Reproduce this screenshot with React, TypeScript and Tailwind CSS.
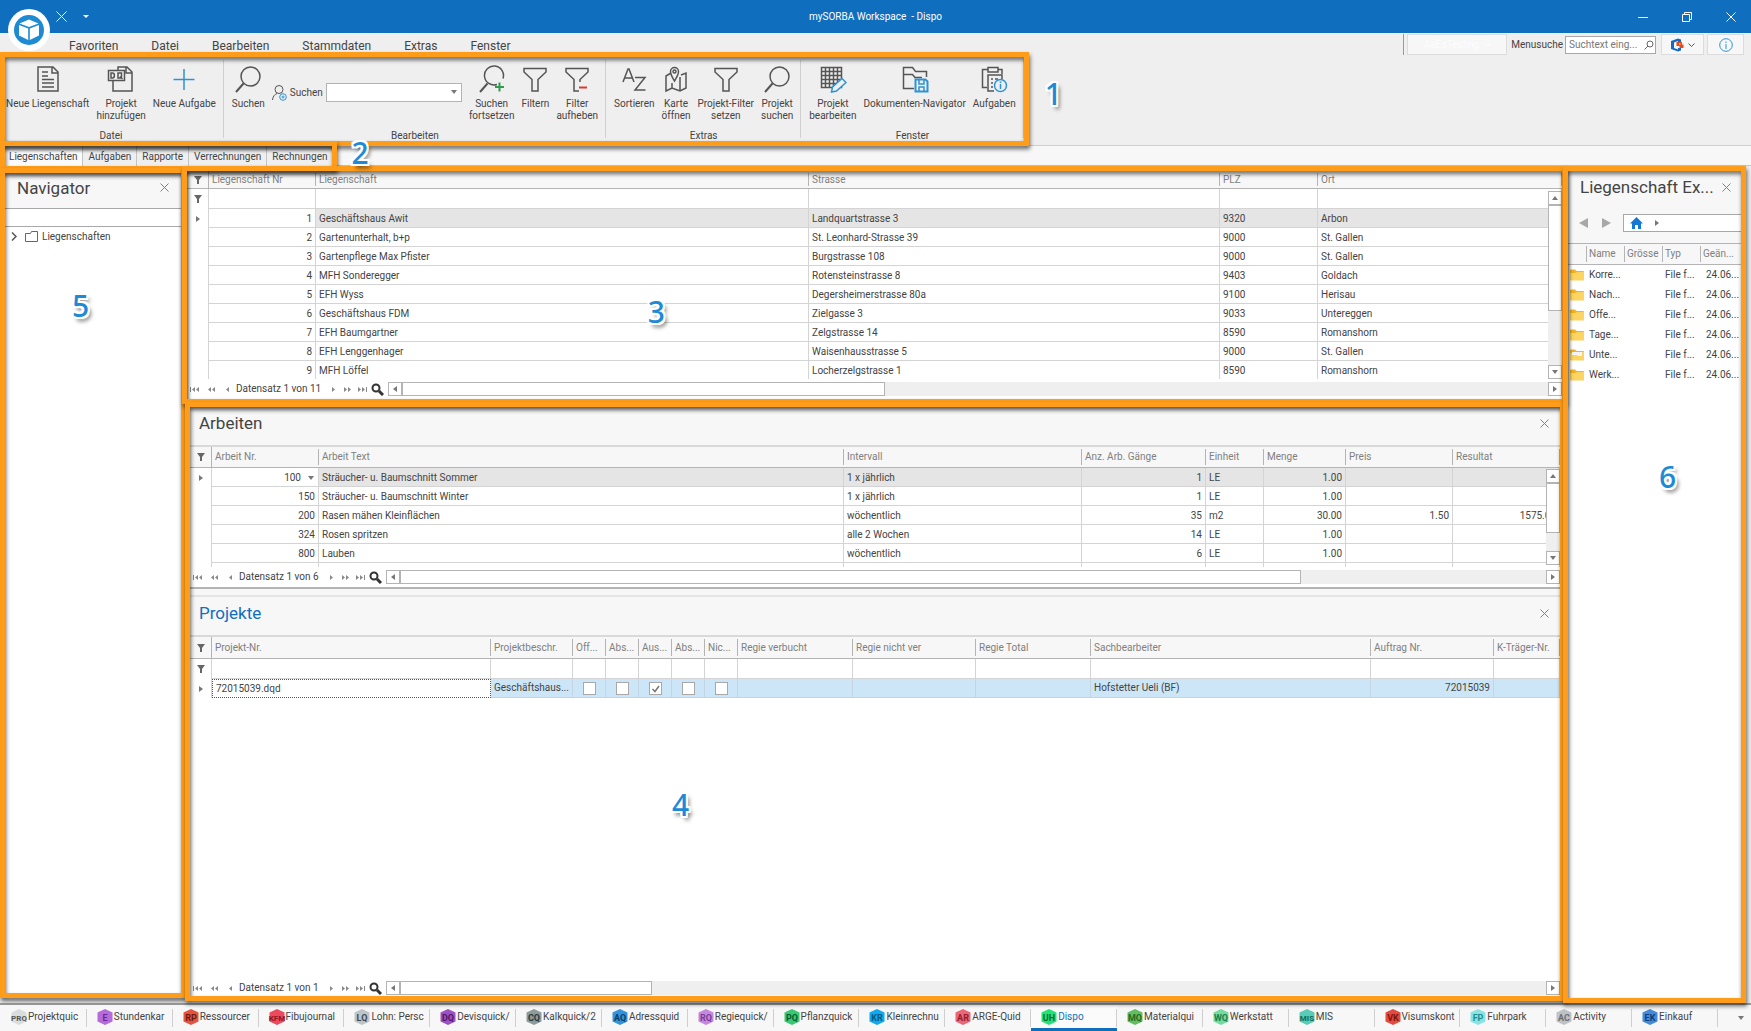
import type { ReactNode } from "react"
import clsx from "clsx"

type Column = {
  label: string
  width?: number
  right?: boolean
}

type AppTab = {
  code: string
  label: string
  color: string
  ink: string
  active?: boolean
}

const menuItems = ["Favoriten", "Datei", "Bearbeiten", "Stammdaten", "Extras", "Fenster"]

const documentTabs = ["Liegenschaften", "Aufgaben", "Rapporte", "Verrechnungen", "Rechnungen"]

const propertyColumns: Column[] = [
  { label: "Liegenschaft Nr", width: 107, right: true },
  { label: "Liegenschaft" },
  { label: "Strasse", width: 411 },
  { label: "PLZ", width: 98 },
  { label: "Ort", width: 244 },
]

const properties = [
  ["1", "Geschäftshaus Awit", "Landquartstrasse 3", "9320", "Arbon"],
  ["2", "Gartenunterhalt, b+p", "St. Leonhard-Strasse 39", "9000", "St. Gallen"],
  ["3", "Gartenpflege Max Pfister", "Burgstrasse 108", "9000", "St. Gallen"],
  ["4", "MFH Sonderegger", "Rotensteinstrasse 8", "9403", "Goldach"],
  ["5", "EFH Wyss", "Degersheimerstrasse 80a", "9100", "Herisau"],
  ["6", "Geschäftshaus FDM", "Zielgasse 3", "9033", "Untereggen"],
  ["7", "EFH Baumgartner", "Zelgstrasse 14", "8590", "Romanshorn"],
  ["8", "EFH Lenggenhager", "Waisenhausstrasse 5", "9000", "St. Gallen"],
  ["9", "MFH Löffel", "Locherzelgstrasse 1", "8590", "Romanshorn"],
]

const workColumns: Column[] = [
  { label: "Arbeit Nr.", width: 107, right: true },
  { label: "Arbeit Text" },
  { label: "Intervall", width: 238 },
  { label: "Anz. Arb. Gänge", width: 124, right: true },
  { label: "Einheit", width: 58 },
  { label: "Menge", width: 82, right: true },
  { label: "Preis", width: 107, right: true },
  { label: "Resultat", width: 107, right: true },
]

const works = [
  ["100", "Sträucher- u. Baumschnitt Sommer", "1 x jährlich", "1", "LE", "1.00", "", ""],
  ["150", "Sträucher- u. Baumschnitt Winter", "1 x jährlich", "1", "LE", "1.00", "", ""],
  ["200", "Rasen mähen Kleinflächen", "wöchentlich", "35", "m2", "30.00", "1.50", "1575.00"],
  ["324", "Rosen spritzen", "alle 2 Wochen", "14", "LE", "1.00", "", ""],
  ["800", "Lauben", "wöchentlich", "6", "LE", "1.00", "", ""],
  ["", "", "", "", "", "", "", ""],
]

const projectColumns: Column[] = [
  { label: "Projekt-Nr." },
  { label: "Projektbeschr.", width: 82 },
  { label: "Off...", width: 33 },
  { label: "Abs...", width: 33 },
  { label: "Aus...", width: 33 },
  { label: "Abs...", width: 33 },
  { label: "Nic...", width: 33 },
  { label: "Regie verbucht", width: 115 },
  { label: "Regie nicht ver", width: 123 },
  { label: "Regie Total", width: 115 },
  { label: "Sachbearbeiter", width: 280 },
  { label: "Auftrag Nr.", width: 123, right: true },
  { label: "K-Träger-Nr.", width: 66 },
]

const folders = ["Korre...", "Nach...", "Offe...", "Tage...", "Unte...", "Werk..."]

const appTabs: AppTab[] = [
  { code: "PRQ", label: "Projektquic", color: "#d9dddd", ink: "#555555" },
  { code: "E", label: "Stundenkar", color: "#b56bdb", ink: "#6b2a8f" },
  { code: "RP", label: "Ressourcer", color: "#e5533f", ink: "#6b1a12" },
  { code: "KFM", label: "Fibujournal", color: "#ec4a5f", ink: "#8c1626" },
  { code: "LQ", label: "Lohn: Persc", color: "#bcc5ca", ink: "#414a50" },
  { code: "DQ", label: "Devisquick/", color: "#9d50c4", ink: "#4c1a68" },
  { code: "CQ", label: "Kalkquick/2", color: "#8d9b9c", ink: "#2b3637" },
  { code: "AQ", label: "Adressquid", color: "#3394dd", ink: "#0d3d68" },
  { code: "RQ", label: "Regiequick/", color: "#c488de", ink: "#7b3d97" },
  { code: "PQ", label: "Pflanzquick", color: "#38c974", ink: "#0d5a2e" },
  { code: "KR", label: "Kleinrechnu", color: "#0caaee", ink: "#075a80" },
  { code: "AR", label: "ARGE-Quid", color: "#ec6676", ink: "#8f2231" },
  { code: "UH", label: "Dispo", color: "#22e373", ink: "#0b6b35", active: true },
  { code: "MQ", label: "Materialqui", color: "#63bd63", ink: "#2a6a1c" },
  { code: "WQ", label: "Werkstatt", color: "#75dba0", ink: "#1e7d47" },
  { code: "MIS", label: "MIS", color: "#58ccb6", ink: "#136a58" },
  { code: "VK", label: "Visumskont", color: "#e44a3e", ink: "#7d150e" },
  { code: "FP", label: "Fuhrpark", color: "#8ae3e3", ink: "#1f8d92" },
  { code: "AC", label: "Activity", color: "#bec2c6", ink: "#6a6f74" },
  { code: "EK", label: "Einkauf", color: "#448cdb", ink: "#123f7c" },
]

const Frame = ({ className = "inset-0" }: { className?: string }) => (
  <div
    aria-hidden="true"
    className={clsx(
      "pointer-events-none absolute z-10 border-5 border-[#ff9c19] [filter:drop-shadow(1px_3px_2px_rgba(0,0,0,0.6))]",
      className,
    )}
  />
)

const Marker = ({ children, className }: { children: ReactNode; className: string }) => (
  <span
    className={clsx(
      "pointer-events-none absolute z-20 font-['Noto_Sans',sans-serif] text-[30px] leading-8 font-medium text-[#1e8ad6]",
      "[text-shadow:2px_0_0_#fff,-2px_0_0_#fff,0_2px_0_#fff,0_-2px_0_#fff,2px_2px_0_#fff,-2px_-2px_0_#fff,2px_-2px_0_#fff,-2px_2px_0_#fff,3px_4px_4px_rgba(0,0,0,0.6)]",
      className,
    )}
  >
    {children}
  </span>
)

const RibbonIcon = ({ children }: { children: ReactNode }) => (
  <svg
    viewBox="0 0 28 28"
    className="size-7"
    fill="none"
    stroke="#555"
    strokeWidth="1.5"
    aria-hidden="true"
  >
    {children}
  </svg>
)

const DocumentIcon = () => (
  <RibbonIcon>
    <path d="M4 2h15l5 5v19H4zM18 2v6h6M8 7h6M8 11h6M8 14.500h12M8 18h12M8 22h12" />
  </RibbonIcon>
)

const ProjectAddIcon = () => (
  <RibbonIcon>
    <path d="M6 16v10h19V7l-5-5H11v3M19 2v6h6" />
    <path d="M1.500 5.500h16v10h-16z" fill="#efefef" />
    <path d="M4 8v5h1.500c2.500 0 2.500-5 0-5zM11 8h3.500v5H11zM13 11.500l2.500 2.500" />
  </RibbonIcon>
)

const PlusIcon = () => (
  <RibbonIcon>
    <path d="M14 4v21M3.500 14.500h21" stroke="#2e93d6" />
  </RibbonIcon>
)

const SearchIcon = () => (
  <RibbonIcon>
    <circle cx="16.500" cy="11.500" r="9.500" />
    <path d="M9.500 18.500L2 27" strokeWidth="2" />
  </RibbonIcon>
)

const SearchNextIcon = () => (
  <RibbonIcon>
    <path d="M19 19.500a9.500 9.500 0 1 1 6-6" />
    <path d="M9.500 18.500L2 27" strokeWidth="2" />
    <path d="M21.500 17.500v9M17 22h9" stroke="#2f9b4e" strokeWidth="2" />
  </RibbonIcon>
)

const FunnelIcon = () => (
  <RibbonIcon>
    <path d="M3 3.500h22v3.500l-8 7.500V26h-6V14.500L3 7z" />
  </RibbonIcon>
)

const FunnelOffIcon = () => (
  <RibbonIcon>
    <path d="M17 17v-2.500l8-7.500V3.500H3V7l8 7.500V26h5" />
    <path d="M16 22.500h8" stroke="#e0372f" strokeWidth="2" />
  </RibbonIcon>
)

const SortIcon = () => (
  <RibbonIcon>
    <path d="M3 17L8 4h1l5 13M4.500 13h8M15 12.500h10L15 25h10.500" />
  </RibbonIcon>
)

const MapIcon = () => (
  <RibbonIcon>
    <path d="M9 8l-5 3v15l6-3 8 3 6-3V8l-5 2M10 18v5M18 12v14" />
    <path d="M12.500 16C10 12 8.500 9.500 8.500 6.500a4 4 0 0 1 8 0c0 3-1.500 5.500-4 9.500z" />
    <circle cx="12.500" cy="6.500" r="1.500" />
  </RibbonIcon>
)

const GridEditIcon = () => (
  <RibbonIcon>
    <path d="M2.500 2.500h20v20h-20zM2.500 6.500h20M2.500 10.500h20M2.500 14.500h20M2.500 18.500h20M6.500 2.500v20M10.500 2.500v20M14.500 2.500v20M18.500 2.500v20" />
    <path d="M12.500 27l1-5L23 13.500l4 4-9.500 8.500z" fill="#efefef" stroke="#2e93d6" />
  </RibbonIcon>
)

const FolderSaveIcon = () => (
  <RibbonIcon>
    <path d="M13 23.500H2.500V2.500h9l3 4h11V12M2.500 9.500h9l2.500 3h7" />
    <path d="M14.500 14.500h10l2 2v10h-12z" fill="#efefef" stroke="#2e93d6" strokeWidth="2" />
    <path d="M18 15v4h5v-4M18 26v-4h5v4" stroke="#2e93d6" />
  </RibbonIcon>
)

const ClipboardInfoIcon = () => (
  <RibbonIcon>
    <path d="M8 4.500H2.500v18H7M18 4.500h4V9M8 2.500h10v4.500H8z" />
    <path d="M14 26H8V10h14v4M11 14h2M15 14h3M11 18h2M11 22h2" />
    <circle cx="20.500" cy="20.500" r="6" fill="#efefef" stroke="#2e93d6" />
    <path d="M20.500 19v5M20.500 16.500v1.500" stroke="#2e93d6" />
  </RibbonIcon>
)

const RibbonButton = ({ icon, lines }: { icon: ReactNode; lines: string[] }) => (
  <button type="button" className="flex flex-col items-center gap-[5px] whitespace-nowrap">
    {icon}
    <span className="flex flex-col items-center">
      {lines.map((line) => (
        <span key={line}>{line}</span>
      ))}
    </span>
  </button>
)

const RibbonGroup = ({ title, children }: { title: string; children: ReactNode }) => (
  <section className="relative flex h-21 flex-col justify-between px-2 pt-2 after:absolute after:inset-y-[3px] after:right-0 after:w-px after:bg-[#cfcfcf] first:pl-px last:after:hidden">
    <div className="flex items-start gap-[7px]">{children}</div>
    <h2 className="text-center leading-none">{title}</h2>
  </section>
)

const TinyFunnel = () => (
  <svg viewBox="0 0 8 8" className="mx-auto size-2" fill="#666" aria-hidden="true">
    <path d="M0 0h8L5 4v4H3V4z" />
  </svg>
)

const Arrow = ({ className }: { className?: string }) => (
  <svg viewBox="0 0 4 6" className={clsx("h-1.5 w-1", className)} fill="#777" aria-hidden="true">
    <path d="M0 0l4 3-4 3z" />
  </svg>
)

const CloseButton = ({ label }: { label: string }) => (
  <button type="button" aria-label={label}>
    <svg viewBox="0 0 9 9" className="size-[9px]" stroke="#808080" aria-hidden="true">
      <path d="M.5.500l8 8M8.500.500l-8 8" />
    </svg>
  </button>
)

const DataGrid = ({
  name,
  columns,
  headClass,
  filterRow,
  children,
}: {
  name: string
  columns: Column[]
  headClass: string
  filterRow?: boolean
  children: ReactNode
}) => (
  <table aria-label={name} className="w-full table-fixed border-separate border-spacing-0">
    <colgroup>
      <col className="w-[22px]" />
      {columns.map((column, index) => (
        <col key={index} style={column.width ? { width: column.width } : undefined} />
      ))}
    </colgroup>
    <thead>
      <tr className={clsx("bg-[#f7f7f7] text-[#808080]", headClass)}>
        <th className="border-r border-b border-[#b4b4b4]" aria-label="Filter">
          <TinyFunnel />
        </th>
        {columns.map((column, index) => (
          <th
            key={index}
            className="relative truncate border-b border-[#b4b4b4] px-[3px] text-left font-normal after:absolute after:inset-y-0.5 after:right-0 after:w-px after:bg-[#b4b4b4]"
          >
            {column.label}
          </th>
        ))}
      </tr>
    </thead>
    <tbody>
      {filterRow ? (
        <tr className="h-5">
          <td className="border-r border-[#d4d4d4]">
            <TinyFunnel />
          </td>
          {columns.map((column, index) => (
            <td key={index} className="border-r border-b border-[#d4d4d4] p-0">
              <input
                aria-label={`${name}: ${column.label} filtern`}
                className="block h-[19px] w-full px-[3px] outline-none"
              />
            </td>
          ))}
        </tr>
      ) : null}
      {children}
    </tbody>
  </table>
)

const GridRow = ({
  columns,
  cells,
  selected,
  dropdown,
}: {
  columns: Column[]
  cells: string[]
  selected?: boolean
  dropdown?: boolean
}) => (
  <tr className="h-[19px]">
    <td className="border-r border-[#d4d4d4]">
      {selected ? <Arrow className="mx-auto" /> : null}
    </td>
    {cells.map((cell, index) => (
      <td
        key={index}
        className={clsx(
          "overflow-hidden border-r border-b border-[#d4d4d4] px-[3px] pt-px whitespace-nowrap",
          columns[index].right && "text-right",
          selected && index > 0 && "bg-[#e5e5e5]",
        )}
      >
        {cell}
        {dropdown && index === 0 ? (
          <Arrow className="mr-0.5 ml-2 inline-block rotate-90" />
        ) : null}
      </td>
    ))}
  </tr>
)

const VerticalScrollbar = ({ className, thumb }: { className: string; thumb: string }) => (
  <div className={clsx("absolute right-0 flex w-3.5 flex-col bg-[#efefef]", className)}>
    <button
      type="button"
      aria-label="Nach oben"
      className="grid h-3.5 place-items-center border border-[#b4b4b4] bg-white"
    >
      <Arrow className="-rotate-90" />
    </button>
    <div className={clsx("border border-[#b4b4b4] bg-white", thumb)} />
    <button
      type="button"
      aria-label="Nach unten"
      className="mt-auto grid h-3.5 place-items-center border border-[#b4b4b4] bg-white"
    >
      <Arrow className="rotate-90" />
    </button>
  </div>
)

const Seek = ({
  label,
  double,
  bar,
  back,
}: {
  label: string
  double?: boolean
  bar?: boolean
  back?: boolean
}) => (
  <button type="button" aria-label={label} className={clsx(back && "rotate-180")}>
    <svg viewBox="0 0 10 5" className="h-[5px] w-2.5" fill="#888" aria-hidden="true">
      <path d={double ? "M1 0l3 2.500-3 2.500zM5 0l3 2.500-3 2.500z" : "M3 0l3 2.500-3 2.500z"} />
      {bar ? <path d="M9 0h1v5H9z" /> : null}
    </svg>
  </button>
)

const RecordBar = ({
  text,
  thumb,
  className = "h-5",
}: {
  text: string
  thumb: string
  className?: string
}) => (
  <div className={clsx("flex shrink-0 items-center bg-white pl-[3px]", className)}>
    <div className="flex items-center gap-1.5">
      <Seek label="Erster Datensatz" double bar back />
      <Seek label="Seite zurück" double back />
      <Seek label="Vorheriger Datensatz" back />
    </div>
    <span className="mr-2 ml-1 whitespace-nowrap">{text}</span>
    <div className="flex items-center gap-1">
      <Seek label="Nächster Datensatz" />
      <Seek label="Seite vor" double />
      <Seek label="Letzter Datensatz" double bar />
    </div>
    <button type="button" aria-label="Datensatz suchen" className="mx-1">
      <svg viewBox="0 0 13 13" className="size-[13px]" fill="none" stroke="#333" aria-hidden="true">
        <circle cx="5" cy="5" r="3.500" strokeWidth="2" />
        <path d="M8 8l4 4" strokeWidth="3" />
      </svg>
    </button>
    <div className="flex h-3.5 flex-1 bg-[#efefef]">
      <button
        type="button"
        aria-label="Nach links"
        className="grid w-3.5 place-items-center border border-[#b4b4b4] bg-white"
      >
        <Arrow className="rotate-180" />
      </button>
      <div className={clsx("border border-[#b4b4b4] bg-white", thumb)} />
      <button
        type="button"
        aria-label="Nach rechts"
        className="ml-auto grid w-3.5 place-items-center border border-[#b4b4b4] bg-white"
      >
        <Arrow />
      </button>
    </div>
  </div>
)

const TitleBar = () => (
  <header className="relative flex h-[33px] items-center justify-between bg-[#106ebe] pr-[15px] pl-14 text-white">
    <div className="absolute top-[9px] left-2 z-20 grid size-[42px] place-items-center rounded-full bg-white">
      <svg viewBox="0 0 30 30" className="size-[30px]" aria-hidden="true">
        <circle cx="15" cy="15" r="15" fill="#1e8ad2" />
        <path d="M15 4.500l9.500 4L15 12 5.500 8.500z" fill="#fff" />
        <path d="M5 10l9.200 3.500V25L5 20.500zM25 10l-9.200 3.500V25L25 20.500z" fill="#fff" />
      </svg>
    </div>
    <div className="flex items-center gap-4">
      <button type="button" aria-label="Schliessen">
        <svg viewBox="0 0 11 11" className="size-[11px]" stroke="#fff" aria-hidden="true">
          <path d="M.5.500l10 10M10.500.500l-10 10" />
        </svg>
      </button>
      <button type="button" aria-label="Schnellzugriff anpassen">
        <svg viewBox="0 0 6 3" className="h-[3px] w-1.5" fill="#fff" aria-hidden="true">
          <path d="M0 0h6L3 3z" />
        </svg>
      </button>
    </div>
    <h1 className="absolute inset-x-0 text-center">mySORBA Workspace &nbsp;- Dispo</h1>
    <div className="relative flex items-center gap-[34px]">
      <button type="button" aria-label="Minimieren">
        <svg viewBox="0 0 10 10" className="size-2.5" stroke="#fff" aria-hidden="true">
          <path d="M0 5.500h10" />
        </svg>
      </button>
      <button type="button" aria-label="Wiederherstellen">
        <svg viewBox="0 0 10 10" className="size-2.5" fill="none" stroke="#fff" aria-hidden="true">
          <path d="M.5 2.500h7v7h-7zM2.500 2.500v-2h7v7h-2" />
        </svg>
      </button>
      <button type="button" aria-label="Fenster schliessen">
        <svg viewBox="0 0 10 10" className="size-2.5" stroke="#fff" aria-hidden="true">
          <path d="M.5.500l9 9M9.500.500l-9 9" />
        </svg>
      </button>
    </div>
  </header>
)

const MenuBar = () => (
  <nav className="flex h-[19px] items-start justify-between pr-[7px] pl-[69px]">
    <div className="flex gap-[33px] pt-[5px] text-xs leading-4">
      {menuItems.map((item) => (
        <button key={item} type="button">
          {item}
        </button>
      ))}
    </div>
    <div className="flex h-[22px] items-stretch pt-px">
      <button
        type="button"
        className="mr-1 flex w-[104px] items-center justify-center gap-1 border-l border-[#6fb389] text-[#fdfdfd]"
      >
        <span className="ml-[3px] flex h-full flex-1 items-center justify-center gap-1 border border-[#dcdcdc] bg-[#f7f7f7]">
          AaEsTesting
          <svg viewBox="0 0 7 4" className="h-1 w-[7px]" fill="none" stroke="#fff" aria-hidden="true">
            <path d="M.5.500l3 3 3-3" />
          </svg>
        </span>
      </button>
      <label className="mr-[5px] flex items-center gap-0.5">
        Menusuche
        <span className="flex h-[18px] w-[91px] items-center border border-[#a8a8a8] bg-white pr-px">
          <input
            placeholder="Suchtext eing..."
            className="w-0 flex-1 pl-[3px] outline-none placeholder:text-[#777]"
          />
          <svg viewBox="0 0 10 10" className="size-2.5" fill="none" stroke="#666" aria-hidden="true">
            <circle cx="6" cy="4" r="3" />
            <path d="M4 6L.5 9.500" />
          </svg>
        </span>
      </label>
      <button
        type="button"
        aria-label="Office"
        className="mr-[3px] flex w-[43px] items-center justify-center gap-1 border border-[#dcdcdc] bg-[#f7f7f7]"
      >
        <svg viewBox="0 0 14 14" className="size-3.5" aria-hidden="true">
          <path d="M8 .5L1 3v8l7 2.500 3-1V10H8v1.500L4 10V4.500l4-1.500v1h3V1.500z" fill="#1769c7" />
          <path d="M6.500 4H12v2.500h1.500V10H9.500V8h-3z" fill="#e64a19" />
          <path d="M9 5.500h1.500v1H9z" fill="#fff" />
        </svg>
        <svg viewBox="0 0 7 4" className="h-1 w-[7px]" fill="none" stroke="#555" aria-hidden="true">
          <path d="M.5.500l3 3 3-3" />
        </svg>
      </button>
      <button
        type="button"
        aria-label="Info"
        className="grid w-[37px] place-items-center border border-[#dcdcdc] bg-[#f7f7f7]"
      >
        <svg viewBox="0 0 14 14" className="size-3.5" fill="none" stroke="#2e93d6" aria-hidden="true">
          <circle cx="7" cy="7" r="6.300" />
          <path d="M7 6v5M7 3.500V5" />
        </svg>
      </button>
    </div>
  </nav>
)

const Ribbon = () => (
  <div className="border-b border-[#cfcfcf]">
    <div className="relative -mb-px flex w-fit p-[5px]">
      <RibbonGroup title="Datei">
        <RibbonButton icon={<DocumentIcon />} lines={["Neue Liegenschaft"]} />
        <RibbonButton icon={<ProjectAddIcon />} lines={["Projekt", "hinzufügen"]} />
        <RibbonButton icon={<PlusIcon />} lines={["Neue Aufgabe"]} />
      </RibbonGroup>
      <RibbonGroup title="Bearbeiten">
        <RibbonButton icon={<SearchIcon />} lines={["Suchen"]} />
        <label className="mt-[18px] flex items-center gap-[3px]">
          <svg viewBox="0 0 15 16" className="h-4 w-[15px]" fill="none" stroke="#555" aria-hidden="true">
            <circle cx="7" cy="4.500" r="4" />
            <path d="M.5 15c.3-3.500 2-5.500 4.500-6.500" />
            <circle cx="11" cy="12" r="3.300" stroke="#2e93d6" />
            <circle cx="11" cy="12" r="1" stroke="#2e93d6" />
          </svg>
          Suchen
          <span className="relative">
            <select className="block h-[19px] w-[136px] appearance-none border border-[#b4b4b4] bg-white outline-none">
              <option></option>
            </select>
            <Arrow className="absolute top-1.5 right-1.5 rotate-90" />
          </span>
        </label>
        <RibbonButton icon={<SearchNextIcon />} lines={["Suchen", "fortsetzen"]} />
        <RibbonButton icon={<FunnelIcon />} lines={["Filtern"]} />
        <RibbonButton icon={<FunnelOffIcon />} lines={["Filter", "aufheben"]} />
      </RibbonGroup>
      <RibbonGroup title="Extras">
        <RibbonButton icon={<SortIcon />} lines={["Sortieren"]} />
        <RibbonButton icon={<MapIcon />} lines={["Karte", "öffnen"]} />
        <RibbonButton icon={<FunnelIcon />} lines={["Projekt-Filter", "setzen"]} />
        <RibbonButton icon={<SearchIcon />} lines={["Projekt", "suchen"]} />
      </RibbonGroup>
      <RibbonGroup title="Fenster">
        <RibbonButton icon={<GridEditIcon />} lines={["Projekt", "bearbeiten"]} />
        <RibbonButton icon={<FolderSaveIcon />} lines={["Dokumenten-Navigator"]} />
        <RibbonButton icon={<ClipboardInfoIcon />} lines={["Aufgaben"]} />
      </RibbonGroup>
      <Frame />
      <Marker className="top-[26px] left-full ml-4">1</Marker>
    </div>
  </div>
)

const DocumentTabs = () => (
  <div className="h-5 border-b border-[#c4c4c4] bg-[#f7f7f7]">
    <div className="relative flex h-5 w-fit pr-[5px] pl-1">
      {documentTabs.map((tab, index) => (
        <button
          key={tab}
          type="button"
          className={clsx(
            "border-r border-[#c4c4c4] px-[5px] pt-0.5 last-of-type:border-r-0",
            index === 0 ? "bg-[#fbfbfb]" : "bg-[#efefef]",
          )}
        >
          {tab}
        </button>
      ))}
      <Frame className="inset-x-0 -inset-y-[5px]" />
      <Marker className="-top-[9px] left-full ml-3.5">2</Marker>
    </div>
  </div>
)

const Navigator = () => (
  <aside className="relative mt-0.5 mb-[5px] flex w-[186px] shrink-0 flex-col bg-white p-[5px]">
    <div className="flex h-[35px] items-center justify-between bg-[#f7f7f7] px-3 pb-1.5">
      <h2 className="text-[17px] leading-6">Navigator</h2>
      <CloseButton label="Navigator schliessen" />
    </div>
    <input
      aria-label="Navigator durchsuchen"
      className="h-[19px] border-y border-[#a8a8a8] bg-white px-1 outline-none"
    />
    <button type="button" className="flex h-[19px] items-center pl-1.5">
      <svg viewBox="0 0 6 9" className="h-[9px] w-1.5" fill="none" stroke="#555" strokeWidth="1.500" aria-hidden="true">
        <path d="M1 .5l4 4-4 4" />
      </svg>
      <svg viewBox="0 0 13 11" className="mr-1 ml-2 h-[11px] w-[13px]" fill="none" stroke="#666" aria-hidden="true">
        <path d="M.5 2.500h5l1-2h6v10H.5z" />
      </svg>
      Liegenschaften
    </button>
    <Frame />
    <Marker className="top-[122px] left-[72px]">5</Marker>
  </aside>
)

const PropertyGrid = () => (
  <section className="relative bg-white p-[5px]">
    <div className="relative h-52 overflow-hidden">
      <DataGrid name="Liegenschaften" columns={propertyColumns} headClass="h-[18px]" filterRow>
        {properties.map((cells, index) => (
          <GridRow key={cells[0]} columns={propertyColumns} cells={cells} selected={index === 0} />
        ))}
      </DataGrid>
      <VerticalScrollbar className="top-5 bottom-0" thumb="h-[106px]" />
    </div>
    <RecordBar text="Datensatz 1 von 11" thumb="w-[483px]" />
    <Frame />
    <Marker className="top-[130px] left-1/3 ml-1">3</Marker>
  </section>
)

const PanelTitle = ({ title, accent }: { title: string; accent?: boolean }) => (
  <div className="flex h-10 shrink-0 items-center justify-between border-b-2 border-[#d9d9d9] bg-[#f7f7f7] pr-[11px] pb-1.5 pl-[9px]">
    <h2 className={clsx("text-[17px] leading-6", accent && "text-[#106ebe]")}>{title}</h2>
    <CloseButton label={`${title} schliessen`} />
  </div>
)

const ProjectCheck = ({ label, checked }: { label: string; checked?: boolean }) => (
  <span className="relative mx-auto block size-[13px]">
    <input
      type="checkbox"
      aria-label={label}
      defaultChecked={checked}
      className="peer block size-[13px] appearance-none border border-[#a8a8a8] bg-white"
    />
    <svg
      viewBox="0 0 13 13"
      className="pointer-events-none absolute inset-0 hidden size-[13px] peer-checked:block"
      fill="none"
      stroke="#777"
      strokeWidth="1.500"
      aria-hidden="true"
    >
      <path d="M3.500 7L6 9.500 10 4" />
    </svg>
  </span>
)

const ProjectRow = () => {
  const cell = "truncate border-r border-b border-[#c3d5e2] bg-[#cde6f7] px-[3px]"
  return (
    <tr className="h-[19px]">
      <td className="border-r border-[#d4d4d4]">
        <Arrow className="mx-auto" />
      </td>
      <td className="truncate border border-dotted border-[#555] px-[3px]">72015039.dqd</td>
      <td className={cell}>Geschäftshaus...</td>
      {projectColumns.slice(2, 7).map((column, index) => (
        <td key={index} className={cell}>
          <ProjectCheck label={column.label} checked={index === 2} />
        </td>
      ))}
      <td className={cell} />
      <td className={cell} />
      <td className={cell} />
      <td className={cell}>Hofstetter Ueli (BF)</td>
      <td className={clsx(cell, "text-right")}>72015039</td>
      <td className={cell} />
    </tr>
  )
}

const DetailPanels = () => (
  <section className="relative mr-0.5 -mt-0.5 ml-[3px] flex flex-1 flex-col bg-white p-[5px]">
    <PanelTitle title="Arbeiten" />
    <div className="relative h-30 shrink-0 overflow-hidden">
      <DataGrid name="Arbeiten" columns={workColumns} headClass="h-[21px]">
        {works.map((cells, index) => (
          <GridRow
            key={index}
            columns={workColumns}
            cells={cells}
            selected={index === 0}
            dropdown={index === 0}
          />
        ))}
      </DataGrid>
      <VerticalScrollbar className="top-[22px] bottom-0.5" thumb="h-[50px]" />
    </div>
    <RecordBar text="Datensatz 1 von 6" thumb="w-[901px]" />
    <div className="h-2.5 shrink-0 border-y-2 border-t-[#b4b4b4] border-b-[#e4e4e4] bg-[#f7f7f7]" />
    <PanelTitle title="Projekte" accent />
    <div className="flex-1 overflow-hidden">
      <DataGrid name="Projekte" columns={projectColumns} headClass="h-[22px]" filterRow>
        <ProjectRow />
      </DataGrid>
    </div>
    <RecordBar text="Datensatz 1 von 1" thumb="w-[252px]" className="h-4" />
    <Frame />
    <Marker className="top-[387px] left-1/3 ml-[27px]">4</Marker>
  </section>
)

const Explorer = () => (
  <aside className="relative -ml-1 flex w-[183px] shrink-0 flex-col bg-white p-[5px]">
    <div className="bg-[#f7f7f7]">
      <div className="flex h-8 items-center justify-between pr-2.5 pl-3">
        <h2 className="text-[17px] leading-6">Liegenschaft Ex...</h2>
        <CloseButton label="Explorer schliessen" />
      </div>
      <div className="flex h-10 items-center pl-[11px]">
        <button type="button" aria-label="Zurück">
          <svg viewBox="0 0 9 10" className="mr-3.5 h-2.5 w-[9px]" fill="#a8a8a8" aria-hidden="true">
            <path d="M9 0v10L0 5z" />
          </svg>
        </button>
        <button type="button" aria-label="Vorwärts">
          <svg viewBox="0 0 9 10" className="mr-3 h-2.5 w-[9px]" fill="#a8a8a8" aria-hidden="true">
            <path d="M0 0v10l9-5z" />
          </svg>
        </button>
        <div className="flex h-[18px] flex-1 items-center gap-3 border border-r-0 border-[#a8a8a8] bg-white pl-1.5">
          <svg viewBox="0 0 13 12" className="h-3 w-[13px]" fill="#1478d4" aria-hidden="true">
            <path d="M6.500 0L13 6.500h-2V12H8V8H5v4H2V6.500H0z" />
          </svg>
          <Arrow />
        </div>
      </div>
    </div>
    <table aria-label="Ordner" className="w-full table-fixed border-separate border-spacing-0">
      <colgroup>
        <col className="w-[18px]" />
        <col className="w-[38px]" />
        <col className="w-[38px]" />
        <col className="w-[38px]" />
        <col />
      </colgroup>
      <thead>
        <tr className="h-[22px] bg-[#f7f7f7] text-left text-[#808080]">
          <th className="border-y border-[#b4b4b4]" aria-label="Symbol" />
          {["Name", "Grösse", "Typ", "Geän..."].map((label) => (
            <th
              key={label}
              className="relative border-y border-[#b4b4b4] pl-[3px] font-normal whitespace-nowrap before:absolute before:inset-y-0.5 before:left-0 before:w-px before:bg-[#b4b4b4]"
            >
              {label}
            </th>
          ))}
        </tr>
      </thead>
      <tbody>
        {folders.map((folder) => (
          <tr key={folder} className="h-5">
            <td className="pl-0.5">
              <svg viewBox="0 0 14 12" className="h-3 w-3.5" aria-hidden="true">
                <path d="M0 1.500Q0 .5 1 .5h4l1.500 1.500H13q1 0 1 1V11H0z" fill="#f5b41e" />
                <path d="M0 4h5.500L7 3h7v8.500H0z" fill="#fcd462" />
                {folder === "Unte..." ? <path d="M2 3h10v4H8L6.500 6H2z" fill="#f4f4f4" /> : null}
              </svg>
            </td>
            <td className="pl-[3px] whitespace-nowrap">{folder}</td>
            <td />
            <td className="pl-[3px] whitespace-nowrap">File f...</td>
            <td className="pl-1.5 whitespace-nowrap">24.06...</td>
          </tr>
        ))}
      </tbody>
    </table>
    <Frame />
    <Marker className="top-[295px] left-24">6</Marker>
  </aside>
)

const AppTabs = () => (
  <footer className="flex h-[26px] shrink-0 bg-[#f7f7f7] pl-px">
    <nav className="flex min-w-0 flex-1">
      {appTabs.map((tab) => (
        <button
          key={tab.code}
          type="button"
          className={clsx(
            "relative flex min-w-0 flex-1 items-center gap-px pt-px pl-2.5 after:absolute after:top-1 after:right-0 after:h-[18px] after:w-px after:bg-[#cfcfcf]",
            tab.active ? "border-b-[3px] border-[#106ebe] bg-[#fbfbfb] text-[#106ebe]" : "pb-[3px]",
          )}
        >
          <svg viewBox="0 0 16 16" className="size-4 shrink-0 overflow-visible" aria-hidden="true">
            <path d="M8 0l7.500 3.500v9L8 16 .5 12.500v-9z" fill={tab.color} />
            <text
              x="8"
              y="12"
              textAnchor="middle"
              fontSize={tab.code.length > 2 ? 8 : 9}
              fontWeight="700"
              fill={tab.ink}
            >
              {tab.code}
            </text>
          </svg>
          <span className="whitespace-nowrap">{tab.label}</span>
        </button>
      ))}
    </nav>
    <button type="button" aria-label="Weitere Module" className="grid w-[33px] place-items-center pl-3">
      <Arrow className="rotate-90" />
    </button>
  </footer>
)

export default function App() {
  return (
    <div className="flex h-screen flex-col overflow-hidden bg-[#efefef] font-[Roboto,sans-serif] text-[10px] leading-3 text-[#444]">
      <TitleBar />
      <MenuBar />
      <Ribbon />
      <DocumentTabs />
      <main className="flex min-h-0 flex-1 pr-[5px]">
        <Navigator />
        <div className="mb-0.5 -ml-1 flex min-w-0 flex-1 flex-col">
          <PropertyGrid />
          <DetailPanels />
        </div>
        <Explorer />
      </main>
      <div className="h-0.5 shrink-0 bg-[#9c9c9c]" />
      <AppTabs />
    </div>
  )
}
